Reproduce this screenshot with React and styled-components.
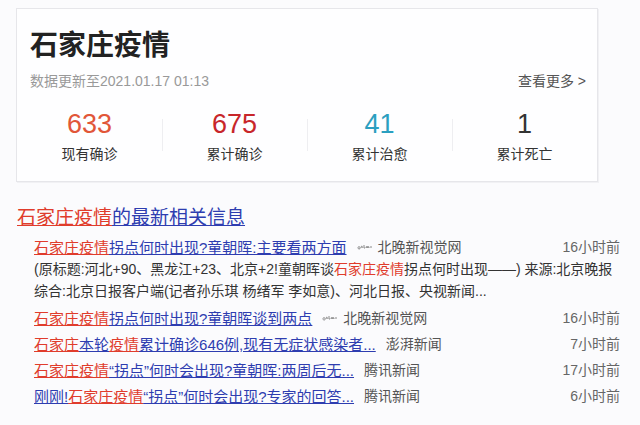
import React from "react";
import styled, { createGlobalStyle } from "styled-components";

const Global = createGlobalStyle`
  html, body { margin: 0; padding: 0; background: #fbfbfd; }
  body { font-family: "Liberation Sans", "Noto Sans CJK SC", sans-serif; color: #333; }
`;

const Page = styled.div`
  padding: 8px 20px 0 16px;
  width: 640px;
  box-sizing: border-box;
`;

const Card = styled.section`
  width: 582px;
  height: 174px;
  box-sizing: border-box;
  background: #fefeff;
  border: 1px solid #e6e6ea;
  box-shadow: 1px 1px 0 #f1f1f4;
  display: flex;
  flex-direction: column;
`;

const Header = styled.div`
  padding: 19px 11px 0 13px;
`;

const Title = styled.h1`
  margin: 0;
  font-size: 28px;
  line-height: 36px;
  font-weight: bold;
  color: #222;
`;

const SubRow = styled.div`
  margin-top: 7px;
  display: flex;
  justify-content: space-between;
  align-items: center;
  font-size: 14px;
  line-height: 20px;
`;

const Updated = styled.span`
  color: #999;
`;

const More = styled.a`
  color: #555;
  text-decoration: none;
`;

const Stats = styled.div`
  margin-top: 16px;
  display: grid;
  grid-template-columns: repeat(4, 1fr);
`;

const Stat = styled.div`
  display: flex;
  flex-direction: column;
  align-items: center;
  position: relative;
  & + &::before {
    content: "";
    position: absolute;
    left: 0;
    top: 12px;
    height: 32px;
    border-left: 1px solid #eeeef1;
  }
`;

const Num = styled.div`
  font-size: 27px;
  line-height: 34px;
  color: ${(p) => p.$color};
`;

const Label = styled.div`
  margin-top: 3px;
  font-size: 14px;
  line-height: 20px;
  color: #333;
`;

const Heading = styled.h2`
  margin: 23px 0 1px 1px;
  font-size: 19px;
  line-height: 26px;
  font-weight: normal;
`;

const Red = styled.span`
  color: #e03c2c;
  text-decoration: ${(p) => (p.$plain ? "none" : "underline")};
`;

const Blue = styled.span`
  color: #2e3db0;
  text-decoration: underline;
`;

const List = styled.ul`
  list-style: none;
  margin: 0;
  padding: 0 0 0 18px;
`;

const Item = styled.li`
  display: flex;
  flex-direction: column;
  padding-top: 2px;
`;

const Row = styled.div`
  display: flex;
  align-items: center;
  height: 24px;
  font-size: 15px;
  white-space: nowrap;
`;

const Link = styled.a`
  text-decoration: underline;
  text-decoration-color: #2e3db0;
  color: #2e3db0;
`;

const Source = styled.span`
  margin-left: 10px;
  font-size: 14px;
  color: #555;
  display: flex;
  align-items: center;
  gap: 5px;
`;

const Time = styled.span`
  margin-left: auto;
  font-size: 14px;
  color: #666;
`;

const Summary = styled.p`
  margin: 0 0 1px 0;
  font-size: 14px;
  line-height: 22px;
  color: #333;
  width: 586px;
`;

const Logo = () => (
  <svg width="16" height="8" viewBox="0 0 16 8" fill="none" stroke="#8a8a8a" strokeWidth="1">
    <path d="M1 6c0-2 2-2 2 0s-2 1-2 0M4 6c1-4 1-1 2 0M7 3v3h1M9 6c0-2 1-2 1 0c0-2 1-2 1 0c0-2 1-2 1 0M13 5h2" />
  </svg>
);

const stats = [
  { n: "633", label: "现有确诊", color: "#e15638" },
  { n: "675", label: "累计确诊", color: "#c8262a" },
  { n: "41", label: "累计治愈", color: "#2b9fc0" },
  { n: "1", label: "累计死亡", color: "#333" },
];

export default function App() {
  return (
    <>
      <Global />
      <Page>
        <Card>
          <Header>
            <Title>石家庄疫情</Title>
            <SubRow>
              <Updated>数据更新至2021.01.17 01:13</Updated>
              <More>查看更多 &gt;</More>
            </SubRow>
          </Header>
          <Stats>
            {stats.map((s) => (
              <Stat key={s.label}>
                <Num $color={s.color}>{s.n}</Num>
                <Label>{s.label}</Label>
              </Stat>
            ))}
          </Stats>
        </Card>

        <Heading>
          <Red>石家庄疫情</Red>
          <Blue>的最新相关信息</Blue>
        </Heading>

        <List>
          <Item>
            <Row>
              <Link>
                <Red>石家庄疫情</Red>拐点何时出现?童朝晖:主要看两方面
              </Link>
              <Source>
                <Logo />
                北晚新视觉网
              </Source>
              <Time>16小时前</Time>
            </Row>
            <Summary>
              (原标题:河北+90、黑龙江+23、北京+2!童朝晖谈<Red $plain>石家庄疫情</Red>拐点何时出现——) 来源:北京晚报综合:北京日报客户端(记者孙乐琪 杨绪军 李如意)、河北日报、央视新闻...
            </Summary>
          </Item>
          <Item>
            <Row>
              <Link>
                <Red>石家庄疫情</Red>拐点何时出现?童朝晖谈到两点
              </Link>
              <Source>
                <Logo />
                北晚新视觉网
              </Source>
              <Time>16小时前</Time>
            </Row>
          </Item>
          <Item>
            <Row>
              <Link>
                <Red>石家庄</Red>本轮<Red>疫情</Red>累计确诊646例,现有无症状感染者...
              </Link>
              <Source>澎湃新闻</Source>
              <Time>7小时前</Time>
            </Row>
          </Item>
          <Item>
            <Row>
              <Link>
                <Red>石家庄疫情</Red>“拐点”何时会出现?童朝晖:两周后无...
              </Link>
              <Source>腾讯新闻</Source>
              <Time>17小时前</Time>
            </Row>
          </Item>
          <Item>
            <Row>
              <Link>
                刚刚!<Red>石家庄疫情</Red>“拐点”何时会出现?专家的回答...
              </Link>
              <Source>腾讯新闻</Source>
              <Time>6小时前</Time>
            </Row>
          </Item>
        </List>
      </Page>
    </>
  );
}
